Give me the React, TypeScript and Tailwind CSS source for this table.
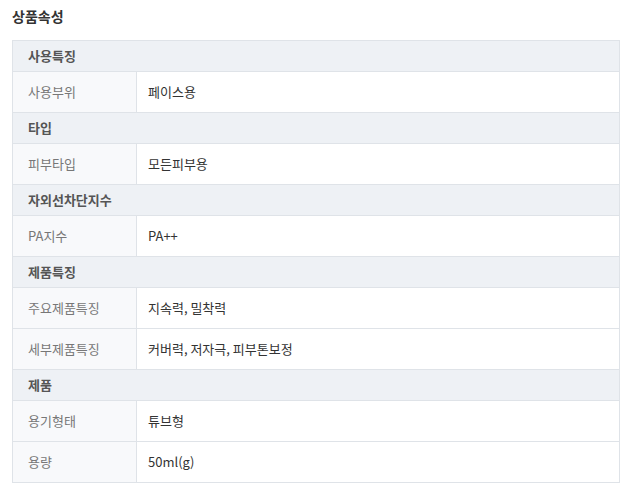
import React from "react";

type Group = { title: string; rows: [string, string][] };

const groups: Group[] = [
  { title: "사용특징", rows: [["사용부위", "페이스용"]] },
  { title: "타입", rows: [["피부타입", "모든피부용"]] },
  { title: "자외선차단지수", rows: [["PA지수", "PA++"]] },
  {
    title: "제품특징",
    rows: [
      ["주요제품특징", "지속력, 밀착력"],
      ["세부제품특징", "커버력, 저자극, 피부톤보정"],
    ],
  },
  {
    title: "제품",
    rows: [
      ["용기형태", "튜브형"],
      ["용량", "50ml(g)"],
    ],
  },
];

export default function App() {
  return (
    <div
      className="w-[627px] h-[492px] bg-white"
      style={{ fontFamily: '"Noto Sans CJK KR", "Noto Sans", sans-serif' }}
    >
      <div className="pl-[12px] pt-[5px] h-[40px] text-[14px] font-bold text-[#333] leading-[22px]">
        상품속성
      </div>
      <div className="ml-[12px] w-[608px] border border-[#dfe3e8]">
        {groups.map((g, gi) => (
          <div key={gi}>
            <div
              className={`bg-[#eef1f5] pl-[15px] flex items-center text-[13px] font-bold text-[#555] ${
                gi > 0 ? "h-[31px] border-t border-[#dfe3e8]" : "h-[30px]"
              }`}
            >
              {g.title}
            </div>
            {g.rows.map(([k, v], ri) => (
              <div key={ri} className="flex h-[41px] border-t border-[#dfe3e8]">
                <div className="w-[124px] shrink-0 bg-[#f8f9fb] border-r border-[#dfe3e8] pl-[15px] flex items-center text-[13px] text-[#777]">
                  {k}
                </div>
                <div className="flex-1 pl-[11px] flex items-center text-[13px] text-[#333]">
                  {v}
                </div>
              </div>
            ))}
          </div>
        ))}
      </div>
    </div>
  );
}
